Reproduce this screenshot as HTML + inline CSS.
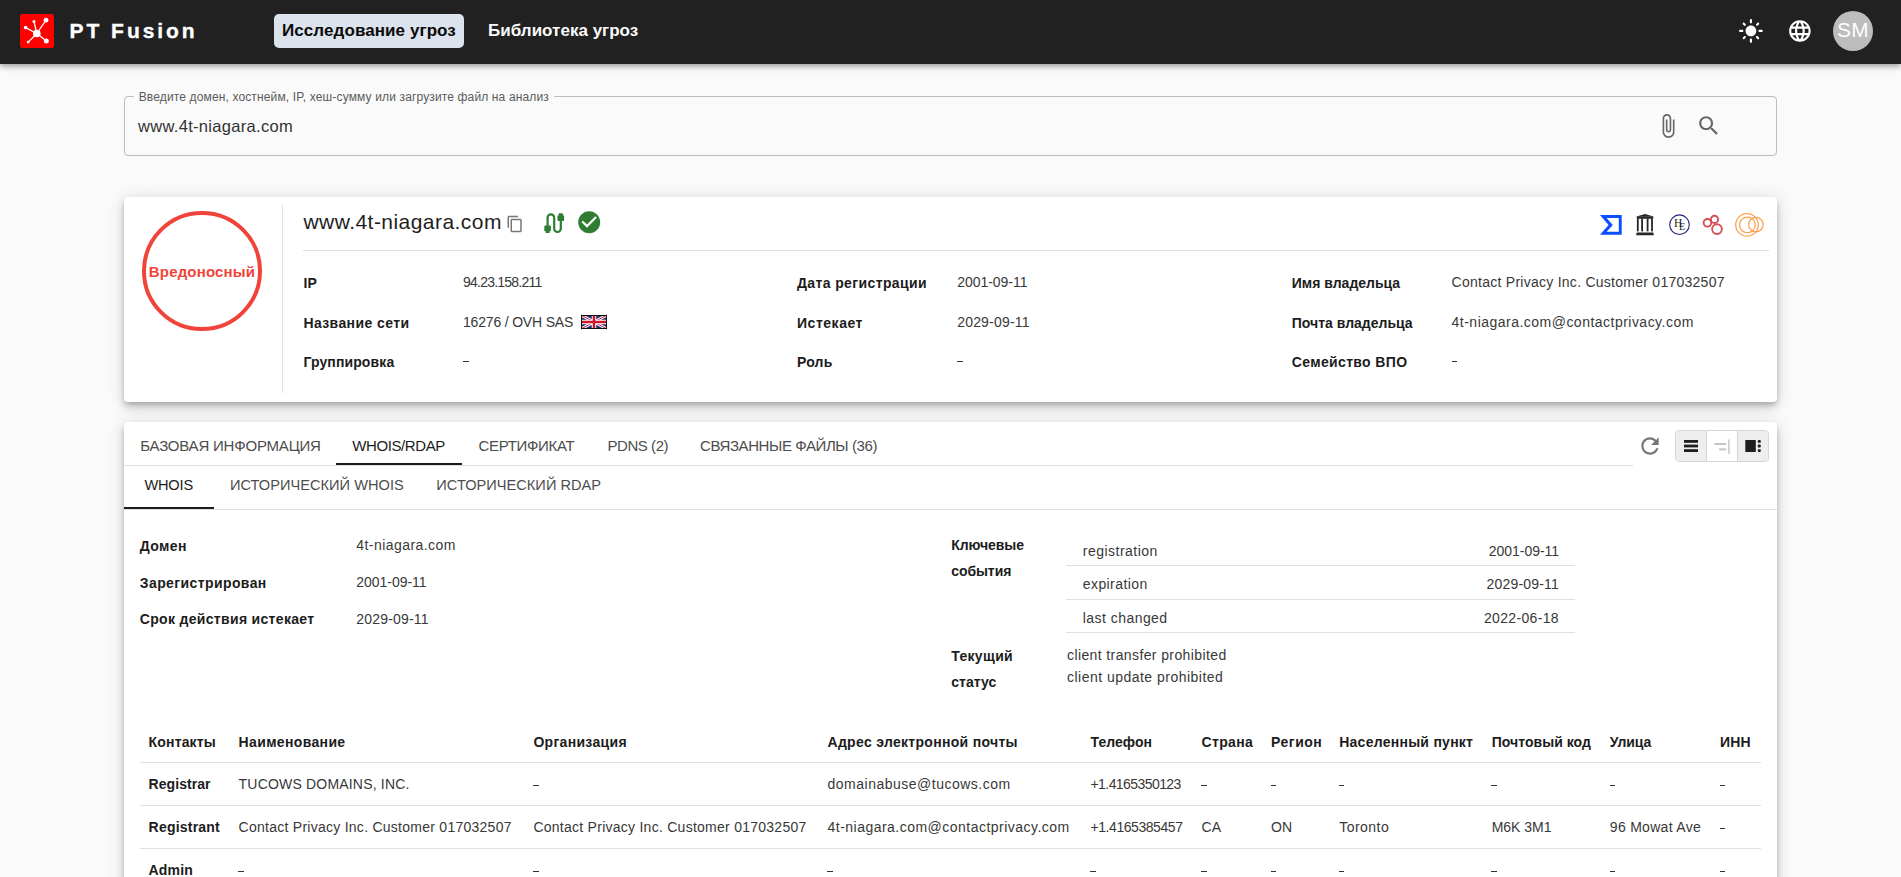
<!DOCTYPE html>
<html lang="ru"><head><meta charset="utf-8"><title>PT Fusion — Исследование угроз</title>
<style>
html,body{margin:0;padding:0;}
body{width:1901px;height:877px;overflow:hidden;position:relative;background:#fafafa;font-family:"Liberation Sans", sans-serif;color:#222;}
.t{position:absolute;white-space:nowrap;line-height:1;}
.abs{position:absolute;}
svg{position:absolute;display:block;overflow:visible;}
#hdr{position:absolute;left:0;top:0;width:1901px;height:64px;background:#212121;z-index:5;
 box-shadow:0px 2px 4px -1px rgba(0,0,0,0.2),0px 4px 5px 0px rgba(0,0,0,0.14),0px 1px 10px 0px rgba(0,0,0,0.12);}
.card{position:absolute;background:#fff;border-radius:4px;
 box-shadow:0px 3px 5px -1px rgba(0,0,0,0.2),0px 6px 10px 0px rgba(0,0,0,0.14),0px 1px 18px 0px rgba(0,0,0,0.12);}
.hl{position:absolute;height:1px;background:#e0e0e0;}
</style></head><body>
<header id="hdr">
<svg style="left:20px;top:14px" width="34" height="34" viewBox="0 0 34 34"><rect x="0" y="0" width="34" height="34" rx="2.5" fill="#ff0000"/><g stroke="#fff" stroke-width="1.3"><line x1="16.8" y1="19.5" x2="26" y2="6.2"/><line x1="16.8" y1="19.5" x2="26.3" y2="27"/><line x1="16.8" y1="19.5" x2="14" y2="7.6"/><line x1="16.8" y1="19.5" x2="5.6" y2="13.6"/><line x1="16.8" y1="19.5" x2="8.2" y2="28.1"/></g><g fill="#fff"><circle cx="16.8" cy="19.5" r="3.8"/><circle cx="26" cy="6.2" r="2.4"/><circle cx="26.3" cy="27" r="2.5"/><circle cx="14" cy="7.6" r="1.5"/><circle cx="5.6" cy="13.6" r="1.8"/><circle cx="8.2" cy="28.1" r="1.4"/></g></svg>
<div class="t" style="left:69.6px;top:20.12px;font-size:21px;font-weight:700;color:#fff;letter-spacing:2.95px;;-webkit-text-stroke:0.35px #fff">PT Fusion</div>
<div class="abs" style="left:274px;top:14px;width:190px;height:34px;background:#dce3ed;border-radius:5px;"></div>
<div class="t" style="left:282px;top:22.41px;font-size:17px;font-weight:700;color:#0a0a0a;letter-spacing:0.08px;">Исследование угроз</div>
<div class="t" style="left:488px;top:22.41px;font-size:17px;font-weight:700;color:#fafafa;letter-spacing:0.02px;">Библиотека угроз</div>
<svg style="left:1737.78px;top:17.88px" width="25.85" height="25.85" viewBox="0 0 24 24"><path fill="#fff" d="M12 7c-2.76 0-5 2.24-5 5s2.24 5 5 5 5-2.24 5-5-2.24-5-5-5zM2 13h2c.55 0 1-.45 1-1s-.45-1-1-1H2c-.55 0-1 .45-1 1s.45 1 1 1zm18 0h2c.55 0 1-.45 1-1s-.45-1-1-1h-2c-.55 0-1 .45-1 1s.45 1 1 1zM11 2v2c0 .55.45 1 1 1s1-.45 1-1V2c0-.55-.45-1-1-1s-1 .45-1 1zm0 18v2c0 .55.45 1 1 1s1-.45 1-1v-2c0-.55-.45-1-1-1s-1 .45-1 1zM5.99 4.58c-.39-.39-1.03-.39-1.41 0-.39.39-.39 1.03 0 1.41l1.06 1.06c.39.39 1.03.39 1.41 0s.39-1.03 0-1.41L5.99 4.58zm12.37 12.37c-.39-.39-1.03-.39-1.41 0-.39.39-.39 1.03 0 1.41l1.06 1.06c.39.39 1.03.39 1.41 0 .39-.39.39-1.03 0-1.41l-1.06-1.06zm1.06-10.96c.39-.39.39-1.03 0-1.41-.39-.39-1.03-.39-1.41 0l-1.06 1.06c-.39.39-.39 1.03 0 1.41s1.03.39 1.41 0l1.06-1.06zM7.05 18.36c.39-.39.39-1.03 0-1.41-.39-.39-1.03-.39-1.41 0l-1.06 1.06c-.39.39-.39 1.03 0 1.41s1.03.39 1.41 0l1.06-1.06z"/></svg>
<svg style="left:1786.9px;top:17.9px" width="25.8" height="25.8" viewBox="0 0 24 24"><path fill="#fff" d="M11.99 2C6.47 2 2 6.48 2 12s4.47 10 9.99 10C17.52 22 22 17.52 22 12S17.52 2 11.99 2zm6.93 6h-2.95c-.32-1.25-.78-2.45-1.38-3.56 1.84.63 3.37 1.91 4.33 3.56zM12 4.04c.83 1.2 1.48 2.53 1.91 3.96h-3.82c.43-1.43 1.08-2.76 1.91-3.96zM4.26 14C4.1 13.36 4 12.69 4 12s.1-1.36.26-2h3.38c-.08.66-.14 1.32-.14 2 0 .68.06 1.34.14 2H4.26zm.82 2h2.95c.32 1.25.78 2.45 1.38 3.56-1.84-.63-3.37-1.9-4.33-3.56zm2.95-8H5.08c.96-1.66 2.49-2.93 4.33-3.56C8.81 5.55 8.35 6.75 8.03 8zM12 19.96c-.83-1.2-1.48-2.53-1.91-3.96h3.82c-.43 1.43-1.08 2.76-1.91 3.96zM14.34 14H9.66c-.09-.66-.16-1.32-.16-2 0-.68.07-1.35.16-2h4.68c.09.65.16 1.32.16 2 0 .68-.07 1.34-.16 2zm.25 5.56c.6-1.11 1.06-2.31 1.38-3.56h2.95c-.96 1.65-2.49 2.93-4.33 3.56zM16.36 14c.08-.66.14-1.32.14-2 0-.68-.06-1.34-.14-2h3.38c.16.64.26 1.31.26 2s-.1 1.36-.26 2h-3.38z"/></svg>
<div class="abs" style="left:1833px;top:10.8px;width:40px;height:40px;border-radius:50%;background:#bdbdbd;"></div>
<div class="t" style="left:1833px;width:40px;text-align:center;top:20.29px;font-size:20.8px;color:#fff;letter-spacing:0.3px;">SM</div>
</header>
<div class="abs" style="left:124px;top:96px;width:1651px;height:58px;border:1px solid #bdbdbd;border-radius:4px;"></div>
<div class="abs" style="left:134px;top:90px;width:420px;height:12px;background:#fafafa;"></div>
<div class="t" style="left:138.7px;top:91.14px;font-size:12px;color:#5a5a5a;letter-spacing:0.14px;">Введите домен, хостнейм, IP, хеш-сумму или загрузите файл на анализ</div>
<div class="t" style="left:138px;top:117.83px;font-size:16.5px;color:#333;letter-spacing:0.31px;">www.4t-niagara.com</div>
<svg style="left:1655.3px;top:112.75px" width="26" height="26" viewBox="0 0 24 24"><path fill="#666" d="M16.5 6v11.5c0 2.21-1.79 4-4 4s-4-1.79-4-4V5c0-1.38 1.12-2.5 2.5-2.5s2.5 1.12 2.5 2.5v10.5c0 .55-.45 1-1 1s-1-.45-1-1V6H10v9.5c0 1.38 1.12 2.5 2.5 2.5s2.5-1.12 2.5-2.5V5c0-2.21-1.79-4-4-4S7 2.79 7 5v12.5c0 3.04 2.46 5.5 5.5 5.5s5.5-2.46 5.5-5.5V6h-1.5z"/></svg>
<svg style="left:1695.7px;top:113px" width="25.6" height="25.6" viewBox="0 0 24 24"><path fill="#666" d="M15.5 14h-.79l-.28-.27C15.41 12.59 16 11.11 16 9.5 16 5.91 13.09 3 9.5 3S3 5.91 3 9.5 5.91 16 9.5 16c1.61 0 3.09-.59 4.23-1.57l.27.28v.79l5 4.99L20.49 19l-4.99-5zm-6 0C7.010 14 5 11.99 5 9.5S7.01 5 9.5 5 14 7.01 14 9.5 11.99 14 9.5 14z"/></svg>
<div class="card" style="left:124px;top:197px;width:1653px;height:205px;"></div>
<div class="abs" style="left:142.3px;top:211.2px;width:111.6px;height:111.6px;border:4px solid #f0443a;border-radius:50%;"></div>
<div class="t" style="left:142px;width:120px;text-align:center;top:264.3px;font-size:15px;font-weight:700;color:#f0443a;letter-spacing:0.17px;">Вредоносный</div>
<div class="abs" style="left:282px;top:205px;width:1px;height:188px;background:#e0e0e0;"></div>
<div class="t" style="left:303.5px;top:211.22px;font-size:21px;color:#1e1e1e;letter-spacing:0.45px;">www.4t-niagara.com</div>
<svg style="left:506px;top:214.5px" width="18" height="18" viewBox="0 0 24 24"><path fill="#777" d="M16 1H4c-1.1 0-2 .9-2 2v14h2V3h12V1zm3 4H8c-1.1 0-2 .9-2 2v14c0 1.1.9 2 2 2h11c1.1 0 2-.9 2-2V7c0-1.1-.9-2-2-2zm0 16H8V7h11v14z"/></svg>
<svg style="left:540.8px;top:209.6px" width="26.4" height="26.4" viewBox="0 0 24 24"><path fill="#2e7d32" d="M20 5V4c0-.55-.45-1-1-1h-2c-.55 0-1 .45-1 1v1h-1v4c0 .55.45 1 1 1h1v7c0 1.1-.9 2-2 2s-2-.9-2-2V7c0-2.21-1.79-4-4-4S5 4.79 5 7v7H4c-.55 0-1 .45-1 1v4h1v1c0 .55.45 1 1 1h2c.55 0 1-.45 1-1v-1h1v-4c0-.55-.45-1-1-1H7V7c0-1.1.9-2 2-2s2 .9 2 2v10c0 2.21 1.79 4 4 4s4-1.79 4-4v-7h1c.55 0 1-.45 1-1V5h-1z"/></svg>
<svg style="left:575.8px;top:209.3px" width="26.4" height="26.4" viewBox="0 0 24 24"><path fill="#2e7d32" d="M12 2C6.48 2 2 6.48 2 12s4.48 10 10 10 10-4.48 10-10S17.52 2 12 2zm-2 15l-5-5 1.41-1.41L10 14.17l7.59-7.59L19 8l-9 9z"/></svg>
<div class="hl" style="left:303px;top:250px;width:1466px;"></div>
<svg style="left:1600.2px;top:215px" width="22" height="20" viewBox="0 0 22 20"><path fill="#0a4fff" fill-rule="evenodd" d="M0 0H21.7V19.7H0L8.6 9.9Z M6.6 2.9L12.8 9.9L6.6 16.8H18.8V2.9Z"/></svg>
<svg style="left:1636px;top:213.5px" width="19" height="22" viewBox="0 0 19 22"><g fill="#262626"><path d="M9 0L17.6 2.4H0.4Z"/><rect x="0.8" y="2.3" width="16.4" height="2.5"/><rect x="0.9" y="4.7" width="1.8" height="12.7"/><rect x="5.2" y="4.7" width="1.8" height="12.7"/><rect x="10.7" y="4.7" width="1.8" height="12.7"/><rect x="15.1" y="4.7" width="1.8" height="12.7"/><path d="M0.8 18.4H17.2L18 21.3H0Z"/></g></svg>
<svg style="left:1668.5px;top:214px" width="22" height="22" viewBox="0 0 22 22"><circle cx="10.5" cy="10.7" r="9.8" fill="none" stroke="#1a237e" stroke-width="1.1"/><text x="5" y="12.6" font-family="Liberation Serif" font-size="11.5" fill="#1e1e1e">H</text><text x="10" y="16" font-family="Liberation Serif" font-size="10" fill="#1e1e1e">E</text></svg>
<svg style="left:1702px;top:214px" width="22" height="22" viewBox="0 0 22 22"><g fill="none" stroke="#d6434c" stroke-width="1.9" opacity="0.95"><circle cx="5.4" cy="8.8" r="3.8"/><circle cx="12.5" cy="5.4" r="3.6"/><circle cx="15" cy="15.1" r="4.9"/></g></svg>
<svg style="left:1734px;top:212px" width="32" height="26" viewBox="0 0 32 26"><g fill="none" stroke="#fba24e" stroke-width="1.2"><circle cx="13" cy="12.9" r="11.3"/><circle cx="13.4" cy="12.9" r="7.85"/><circle cx="21.9" cy="12.6" r="7.25"/></g></svg>
<div class="t" style="left:303.4px;top:275.85px;font-size:14px;font-weight:700;color:#1c1c1c;letter-spacing:0.2px;">IP</div>
<div class="t" style="left:463px;top:275.35px;font-size:14px;color:#383838;letter-spacing:-0.77px;">94.23.158.211</div>
<div class="t" style="left:303.4px;top:315.65px;font-size:14px;font-weight:700;color:#1c1c1c;letter-spacing:0.4px;">Название сети</div>
<div class="t" style="left:463px;top:315.15px;font-size:14px;color:#383838;letter-spacing:-0.18px;">16276 / OVH SAS</div>
<div class="t" style="left:303.4px;top:355.15px;font-size:14px;font-weight:700;color:#1c1c1c;letter-spacing:0.12px;">Группировка</div>
<div class="abs" style="left:463.2px;top:360.65px;width:5.5px;height:1.3px;background:#333;"></div>
<div class="t" style="left:797px;top:275.85px;font-size:14px;font-weight:700;color:#1c1c1c;letter-spacing:0.38px;">Дата регистрации</div>
<div class="t" style="left:957.2px;top:275.35px;font-size:14px;color:#383838;letter-spacing:-0.03px;">2001-09-11</div>
<div class="t" style="left:797px;top:315.65px;font-size:14px;font-weight:700;color:#1c1c1c;letter-spacing:0.53px;">Истекает</div>
<div class="t" style="left:957.2px;top:315.15px;font-size:14px;color:#383838;letter-spacing:0.19px;">2029-09-11</div>
<div class="t" style="left:797px;top:355.15px;font-size:14px;font-weight:700;color:#1c1c1c;letter-spacing:0.2px;">Роль</div>
<div class="abs" style="left:957.4px;top:360.65px;width:5.5px;height:1.3px;background:#333;"></div>
<div class="t" style="left:1291.8px;top:275.85px;font-size:14px;font-weight:700;color:#1c1c1c;letter-spacing:-0px;">Имя владельца</div>
<div class="t" style="left:1451.6px;top:275.35px;font-size:14px;color:#383838;letter-spacing:0.26px;">Contact Privacy Inc. Customer 017032507</div>
<div class="t" style="left:1291.8px;top:315.65px;font-size:14px;font-weight:700;color:#1c1c1c;letter-spacing:0px;">Почта владельца</div>
<div class="t" style="left:1451.6px;top:315.15px;font-size:14px;color:#383838;letter-spacing:0.48px;">4t-niagara.com@contactprivacy.com</div>
<div class="t" style="left:1291.8px;top:355.15px;font-size:14px;font-weight:700;color:#1c1c1c;letter-spacing:0.35px;">Семейство ВПО</div>
<div class="abs" style="left:1451.8px;top:360.65px;width:5.5px;height:1.3px;background:#333;"></div>
<svg style="left:581px;top:315px" width="26" height="14" viewBox="0 0 26 14"><rect width="26" height="14" fill="#1a2f7a"/><path d="M0 0L26 14M26 0L0 14" stroke="#fff" stroke-width="3"/><path d="M0 0L26 14M26 0L0 14" stroke="#cf142b" stroke-width="1"/><path d="M13 0V14M0 7H26" stroke="#fff" stroke-width="4.5"/><path d="M13 0V14M0 7H26" stroke="#cf142b" stroke-width="2.5"/><rect x="0.5" y="0.5" width="25" height="13" fill="none" stroke="#111" stroke-width="1"/></svg>
<div class="card" style="left:124px;top:422px;width:1653px;height:520px;"></div>
<div class="t" style="left:140.2px;top:437.9px;font-size:15px;color:#4d4d4d;letter-spacing:-0.2px;">БАЗОВАЯ ИНФОРМАЦИЯ</div>
<div class="t" style="left:352.3px;top:437.9px;font-size:15px;color:#1c1c1c;letter-spacing:-0.41px;">WHOIS/RDAP</div>
<div class="t" style="left:478.5px;top:437.9px;font-size:15px;color:#4d4d4d;letter-spacing:-0.32px;">СЕРТИФИКАТ</div>
<div class="t" style="left:607.5px;top:437.9px;font-size:15px;color:#4d4d4d;letter-spacing:-0.45px;">PDNS (2)</div>
<div class="t" style="left:700px;top:437.9px;font-size:15px;color:#4d4d4d;letter-spacing:-0.41px;">СВЯЗАННЫЕ ФАЙЛЫ (36)</div>
<div class="hl" style="left:124px;top:465px;width:1509px;"></div>
<div class="abs" style="left:336px;top:463px;width:126px;height:2px;background:#1c1c1c;"></div>
<svg style="left:1637px;top:432.9px" width="26" height="26" viewBox="0 0 24 24"><path fill="#757575" d="M17.65 6.35C16.2 4.9 14.21 4 12 4c-4.42 0-7.99 3.58-7.99 8s3.57 8 7.99 8c3.73 0 6.84-2.55 7.73-6h-2.08c-.82 2.33-3.04 4-5.65 4-3.31 0-6-2.69-6-6s2.69-6 6-6c1.66 0 3.14.69 4.22 1.78L13 11h7V4l-2.35 2.35z"/></svg>
<div class="abs" style="left:1675px;top:430px;width:92px;height:30px;border:1px solid #d6d6d6;border-radius:4px;overflow:hidden;background:#fff;"><div class="abs" style="left:0;top:0;width:30px;height:30px;background:#eeeeee;border-right:1px solid #d6d6d6;"></div><div class="abs" style="left:61px;top:0;width:31px;height:30px;background:#eeeeee;border-left:1px solid #d6d6d6;"></div></div>
<svg style="left:1684px;top:440px" width="14" height="12" viewBox="0 0 14 12"><g fill="#1e1e1e"><rect x="0" y="0" width="14" height="2.8"/><rect x="0" y="4.6" width="14" height="2.8"/><rect x="0" y="9.2" width="14" height="2.8"/></g></svg>
<svg style="left:1714px;top:438.5px" width="16" height="15" viewBox="0 0 16 15"><g fill="#c4c4c4"><rect x="0.4" y="4" width="11.9" height="2"/><rect x="5.2" y="9.4" width="7.1" height="2"/><rect x="14.2" y="0.5" width="1.4" height="14.3"/></g></svg>
<svg style="left:1745px;top:440px" width="16" height="12" viewBox="0 0 16 12"><g fill="#1e1e1e"><rect x="0.3" y="0" width="10.5" height="12"/><rect x="12.8" y="0" width="3" height="2.8" rx="0.9"/><rect x="12.8" y="4.6" width="3" height="2.8" rx="0.9"/><rect x="12.8" y="9.2" width="3" height="2.8" rx="0.9"/></g></svg>
<div class="t" style="left:144.4px;top:478.44px;font-size:14.6px;color:#1c1c1c;letter-spacing:-0.18px;">WHOIS</div>
<div class="t" style="left:230px;top:478.44px;font-size:14.6px;color:#4d4d4d;letter-spacing:0.02px;">ИСТОРИЧЕСКИЙ WHOIS</div>
<div class="t" style="left:436.3px;top:478.44px;font-size:14.6px;color:#4d4d4d;letter-spacing:0.02px;">ИСТОРИЧЕСКИЙ RDAP</div>
<div class="hl" style="left:124px;top:509px;width:1653px;"></div>
<div class="abs" style="left:124px;top:507px;width:90px;height:2px;background:#1c1c1c;"></div>
<div class="t" style="left:139.8px;top:538.65px;font-size:14px;font-weight:700;color:#1c1c1c;letter-spacing:0.4px;">Домен</div>
<div class="t" style="left:356.3px;top:537.85px;font-size:14px;color:#383838;letter-spacing:0.44px;">4t-niagara.com</div>
<div class="t" style="left:139.8px;top:575.75px;font-size:14px;font-weight:700;color:#1c1c1c;letter-spacing:0.4px;">Зарегистрирован</div>
<div class="t" style="left:356.3px;top:574.95px;font-size:14px;color:#383838;letter-spacing:-0.03px;">2001-09-11</div>
<div class="t" style="left:139.8px;top:612.45px;font-size:14px;font-weight:700;color:#1c1c1c;letter-spacing:0.32px;">Срок действия истекает</div>
<div class="t" style="left:356.3px;top:611.65px;font-size:14px;color:#383838;letter-spacing:0.19px;">2029-09-11</div>
<div class="t" style="left:951.2px;top:538.15px;font-size:14px;font-weight:700;color:#1c1c1c;letter-spacing:-0.05px;">Ключевые</div>
<div class="t" style="left:951.2px;top:564.25px;font-size:14px;font-weight:700;color:#1c1c1c;letter-spacing:-0.07px;">события</div>
<div class="t" style="left:1082.8px;top:543.95px;font-size:14px;color:#383838;letter-spacing:0.48px;">registration</div>
<div class="t" style="right:342px;top:543.95px;font-size:14px;color:#383838;letter-spacing:-0.03px;">2001-09-11</div>
<div class="hl" style="left:1066px;top:565px;width:509px;"></div>
<div class="t" style="left:1082.8px;top:576.85px;font-size:14px;color:#383838;letter-spacing:0.41px;">expiration</div>
<div class="t" style="right:342px;top:576.85px;font-size:14px;color:#383838;letter-spacing:0.19px;">2029-09-11</div>
<div class="hl" style="left:1066px;top:599px;width:509px;"></div>
<div class="t" style="left:1082.8px;top:610.75px;font-size:14px;color:#383838;letter-spacing:0.45px;">last changed</div>
<div class="t" style="right:342px;top:610.75px;font-size:14px;color:#383838;letter-spacing:0.35px;">2022-06-18</div>
<div class="hl" style="left:1066px;top:632px;width:509px;"></div>
<div class="t" style="left:951.2px;top:648.95px;font-size:14px;font-weight:700;color:#1c1c1c;letter-spacing:0.34px;">Текущий</div>
<div class="t" style="left:951.2px;top:674.75px;font-size:14px;font-weight:700;color:#1c1c1c;letter-spacing:0.05px;">статус</div>
<div class="t" style="left:1067px;top:647.65px;font-size:14px;color:#383838;letter-spacing:0.39px;">client transfer prohibited</div>
<div class="t" style="left:1067px;top:670.15px;font-size:14px;color:#383838;letter-spacing:0.48px;">client update prohibited</div>
<div class="t" style="left:148.6px;top:735.25px;font-size:14px;font-weight:700;color:#1c1c1c;letter-spacing:0.16px;">Контакты</div>
<div class="t" style="left:238.6px;top:735.25px;font-size:14px;font-weight:700;color:#1c1c1c;letter-spacing:0.35px;">Наименование</div>
<div class="t" style="left:533.4px;top:735.25px;font-size:14px;font-weight:700;color:#1c1c1c;letter-spacing:0.31px;">Организация</div>
<div class="t" style="left:827.5px;top:735.25px;font-size:14px;font-weight:700;color:#1c1c1c;letter-spacing:0.31px;">Адрес электронной почты</div>
<div class="t" style="left:1090.5px;top:735.25px;font-size:14px;font-weight:700;color:#1c1c1c;letter-spacing:0.04px;">Телефон</div>
<div class="t" style="left:1201.6px;top:735.25px;font-size:14px;font-weight:700;color:#1c1c1c;letter-spacing:0.33px;">Страна</div>
<div class="t" style="left:1271px;top:735.25px;font-size:14px;font-weight:700;color:#1c1c1c;letter-spacing:0.51px;">Регион</div>
<div class="t" style="left:1339.2px;top:735.25px;font-size:14px;font-weight:700;color:#1c1c1c;letter-spacing:0.26px;">Населенный пункт</div>
<div class="t" style="left:1491.7px;top:735.25px;font-size:14px;font-weight:700;color:#1c1c1c;letter-spacing:0.04px;">Почтовый код</div>
<div class="t" style="left:1609.8px;top:735.25px;font-size:14px;font-weight:700;color:#1c1c1c;letter-spacing:-0.1px;">Улица</div>
<div class="t" style="left:1720px;top:735.25px;font-size:14px;font-weight:700;color:#1c1c1c;letter-spacing:0.2px;">ИНН</div>
<div class="t" style="left:148.6px;top:777.15px;font-size:14px;font-weight:700;color:#1c1c1c;letter-spacing:0.05px;">Registrar</div>
<div class="t" style="left:238.6px;top:776.65px;font-size:14px;color:#383838;letter-spacing:0.19px;">TUCOWS DOMAINS, INC.</div>
<div class="abs" style="left:533.1px;top:784.75px;width:5.5px;height:1.3px;background:#333;"></div>
<div class="t" style="left:827.5px;top:776.65px;font-size:14px;color:#383838;letter-spacing:0.5px;">domainabuse@tucows.com</div>
<div class="t" style="left:1090.5px;top:776.65px;font-size:14px;color:#383838;letter-spacing:-0.57px;">+1.4165350123</div>
<div class="abs" style="left:1201.3px;top:784.75px;width:5.5px;height:1.3px;background:#333;"></div>
<div class="abs" style="left:1270.7px;top:784.75px;width:5.5px;height:1.3px;background:#333;"></div>
<div class="abs" style="left:1338.9px;top:784.75px;width:5.5px;height:1.3px;background:#333;"></div>
<div class="abs" style="left:1491.4px;top:784.75px;width:5.5px;height:1.3px;background:#333;"></div>
<div class="abs" style="left:1609.5px;top:784.75px;width:5.5px;height:1.3px;background:#333;"></div>
<div class="abs" style="left:1719.7px;top:784.75px;width:5.5px;height:1.3px;background:#333;"></div>
<div class="t" style="left:148.6px;top:820.15px;font-size:14px;font-weight:700;color:#1c1c1c;letter-spacing:0.21px;">Registrant</div>
<div class="t" style="left:238.6px;top:819.65px;font-size:14px;color:#383838;letter-spacing:0.26px;">Contact Privacy Inc. Customer 017032507</div>
<div class="t" style="left:533.4px;top:819.65px;font-size:14px;color:#383838;letter-spacing:0.26px;">Contact Privacy Inc. Customer 017032507</div>
<div class="t" style="left:827.5px;top:819.65px;font-size:14px;color:#383838;letter-spacing:0.48px;">4t-niagara.com@contactprivacy.com</div>
<div class="t" style="left:1090.5px;top:819.65px;font-size:14px;color:#383838;letter-spacing:-0.44px;">+1.4165385457</div>
<div class="t" style="left:1201.6px;top:819.65px;font-size:14px;color:#383838;">CA</div>
<div class="t" style="left:1271px;top:819.65px;font-size:14px;color:#383838;">ON</div>
<div class="t" style="left:1339.2px;top:819.65px;font-size:14px;color:#383838;letter-spacing:0.47px;">Toronto</div>
<div class="t" style="left:1491.7px;top:819.65px;font-size:14px;color:#383838;letter-spacing:-0.02px;">M6K 3M1</div>
<div class="t" style="left:1609.8px;top:819.65px;font-size:14px;color:#383838;letter-spacing:0.3px;">96 Mowat Ave</div>
<div class="abs" style="left:1719.7px;top:827.75px;width:5.5px;height:1.3px;background:#333;"></div>
<div class="t" style="left:148.6px;top:863.15px;font-size:14px;font-weight:700;color:#1c1c1c;letter-spacing:0.17px;">Admin</div>
<div class="abs" style="left:238.3px;top:870.75px;width:5.5px;height:1.3px;background:#333;"></div>
<div class="abs" style="left:533.1px;top:870.75px;width:5.5px;height:1.3px;background:#333;"></div>
<div class="abs" style="left:827.2px;top:870.75px;width:5.5px;height:1.3px;background:#333;"></div>
<div class="abs" style="left:1090.2px;top:870.75px;width:5.5px;height:1.3px;background:#333;"></div>
<div class="abs" style="left:1201.3px;top:870.75px;width:5.5px;height:1.3px;background:#333;"></div>
<div class="abs" style="left:1270.7px;top:870.75px;width:5.5px;height:1.3px;background:#333;"></div>
<div class="abs" style="left:1338.9px;top:870.75px;width:5.5px;height:1.3px;background:#333;"></div>
<div class="abs" style="left:1491.4px;top:870.75px;width:5.5px;height:1.3px;background:#333;"></div>
<div class="abs" style="left:1609.5px;top:870.75px;width:5.5px;height:1.3px;background:#333;"></div>
<div class="abs" style="left:1719.7px;top:870.75px;width:5.5px;height:1.3px;background:#333;"></div>
<div class="hl" style="left:140px;top:762px;width:1621px;"></div>
<div class="hl" style="left:140px;top:805px;width:1621px;"></div>
<div class="hl" style="left:140px;top:848px;width:1621px;"></div>
</body></html>
